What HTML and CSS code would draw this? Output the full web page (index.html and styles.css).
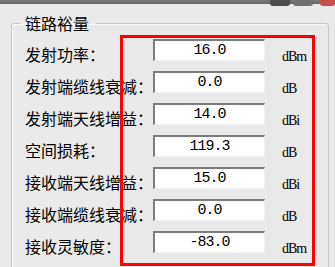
FILE: index.html
```html
<!DOCTYPE html>
<html lang="zh-CN">
<head>
  <meta charset="UTF-8">
  <title>链路裕量</title>
  <link rel="stylesheet" href="styles.css">
</head>
<body>
  <div class="title-bar">
    <span class="win-btn win-min"></span>
    <span class="win-btn win-max"></span>
    <span class="win-btn win-close"></span>
  </div>

  <fieldset class="group">
    <legend>链路裕量</legend>
    <div class="row">
      <label class="label">发射功率：</label>
      <input class="value" type="text" value="16.0">
      <span class="unit">dBm</span>
    </div>
    <div class="row">
      <label class="label">发射端缆线衰减：</label>
      <input class="value" type="text" value="0.0">
      <span class="unit">dB</span>
    </div>
    <div class="row">
      <label class="label">发射端天线增益：</label>
      <input class="value" type="text" value="14.0">
      <span class="unit">dBi</span>
    </div>
    <div class="row">
      <label class="label">空间损耗：</label>
      <input class="value" type="text" value="119.3">
      <span class="unit">dB</span>
    </div>
    <div class="row">
      <label class="label">接收端天线增益：</label>
      <input class="value" type="text" value="15.0">
      <span class="unit">dBi</span>
    </div>
    <div class="row">
      <label class="label">接收端缆线衰减：</label>
      <input class="value" type="text" value="0.0">
      <span class="unit">dB</span>
    </div>
    <div class="row">
      <label class="label">接收灵敏度：</label>
      <input class="value" type="text" value="-83.0">
      <span class="unit">dBm</span>
    </div>
  </fieldset>

  <div class="highlight"></div>
</body>
</html>
```

FILE: styles.css
```css
* {
  box-sizing: border-box;
}
html, body {
  margin: 0;
  padding: 0;
  overflow: hidden;
}
body {
  position: relative;
  height: 267px;
  background: #e9e9e9;
  font-family: "Noto Sans CJK SC", sans-serif;
  color: #000;
}
.title-bar {
  display: flex;
  justify-content: flex-end;
  align-items: flex-start;
  height: 4px;
  background: linear-gradient(to bottom, #7a7a7a, #656565);
}
.win-btn {
  display: block;
  height: 6px;
  border-radius: 0 0 3px 3px;
}
.win-min {
  width: 20px;
  background: #4e4e4e;
  margin-right: 3px;
}
.win-max {
  width: 20px;
  background: #707070;
  margin-right: 7px;
}
.win-close {
  width: 15px;
  background: #c94f4f;
}
.group {
  margin: 9px 6px 0 11px;
  padding: 1px 13px 20px 13px;
  border: 1px solid #c4c4c4;
  border-radius: 3px;
  box-shadow: inset 1px 1px 0 #fafafa;
  min-width: 0;
}
.group legend {
  font-size: 16px;
  line-height: 20px;
  padding: 0 7px 0 5px;
  margin-left: -5px;
}
.row {
  display: flex;
  align-items: center;
  height: 32px;
}
.label {
  width: 128px;
  flex-shrink: 0;
  padding-top: 7px;
  font-size: 16px;
  line-height: 20px;
  white-space: nowrap;
}
.value {
  width: 112px;
  height: 22px;
  margin: 0;
  padding: 0;
  border-style: solid;
  border-width: 2px 1px 1px 2px;
  border-color: #7c7c7c #f2f2f2 #f2f2f2 #7c7c7c;
  background: #fff;
  font-family: "Liberation Mono", monospace;
  font-size: 15px;
  letter-spacing: -1px;
  text-align: center;
  color: #000;
}
.unit {
  margin-left: 17px;
  padding-top: 14px;
  font-family: "Liberation Serif", serif;
  font-size: 14px;
  letter-spacing: -1px;
}
.highlight {
  position: absolute;
  left: 120px;
  top: 35px;
  width: 195px;
  height: 231px;
  border: 3px solid #ff0000;
  pointer-events: none;
}
```
